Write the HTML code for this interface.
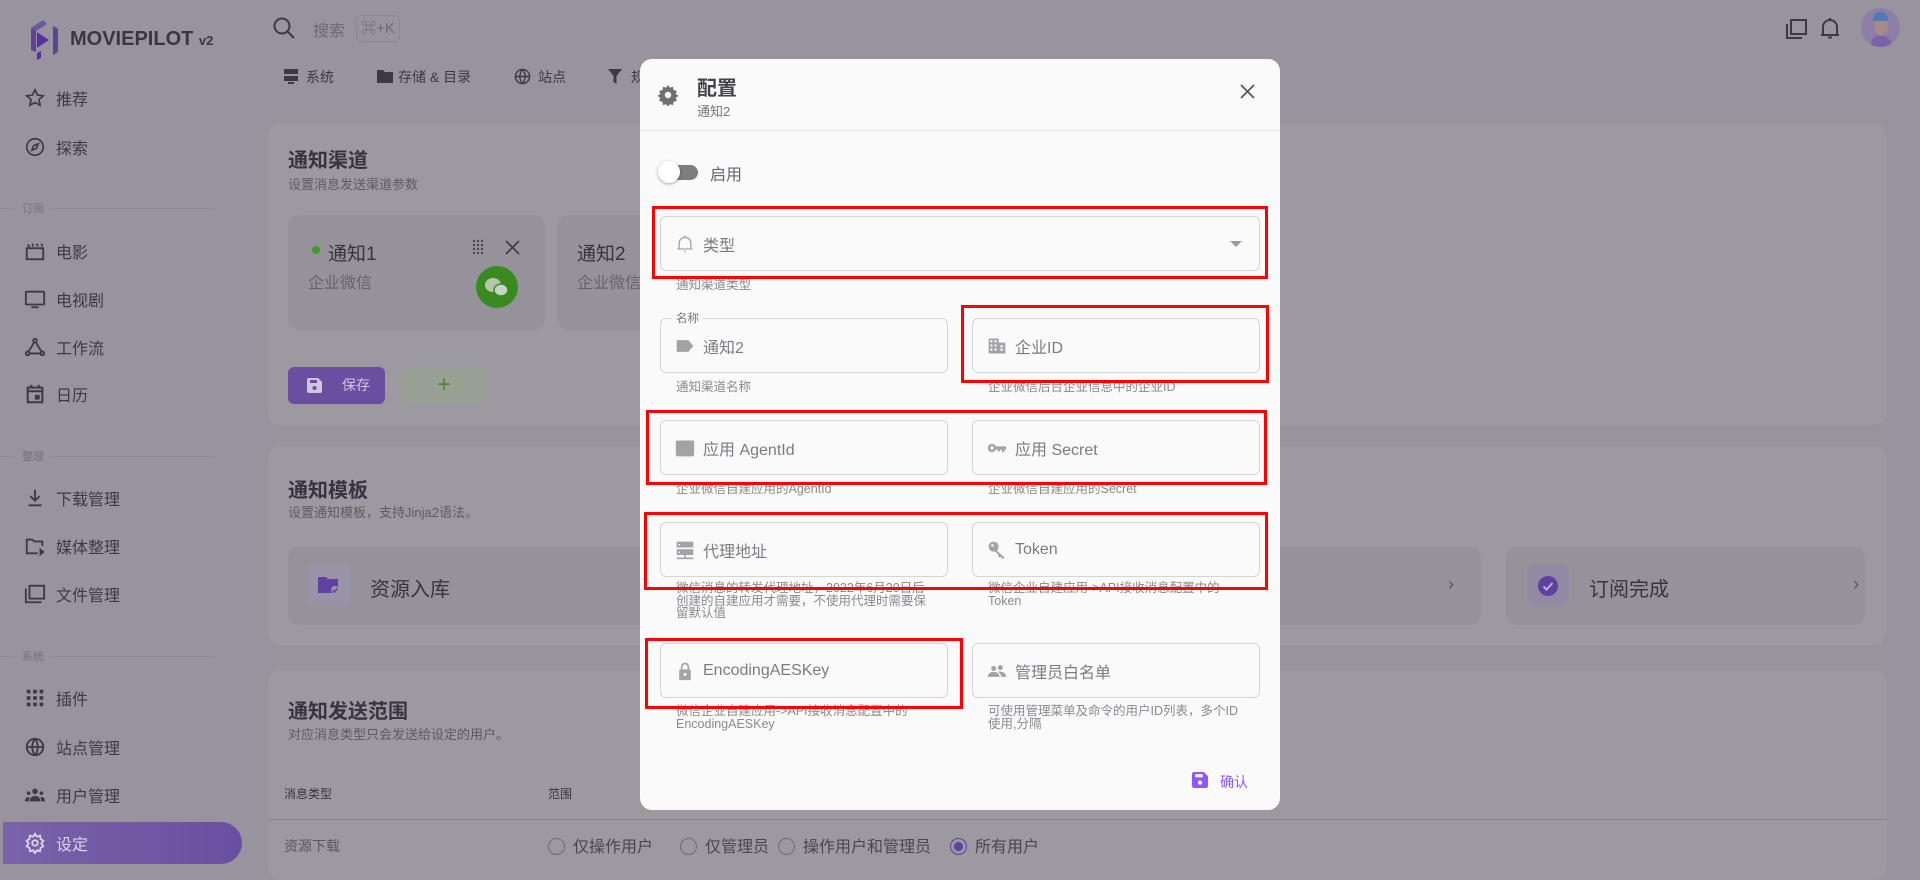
<!DOCTYPE html>
<html><head><meta charset="utf-8">
<style>
*{box-sizing:border-box;margin:0;padding:0}
body{width:1920px;height:870px;overflow:hidden;background:#97949e;font-family:"Liberation Sans","Noto Sans CJK SC",sans-serif;position:relative;color:#3d3944}
.a{position:absolute;white-space:nowrap}
.nav{position:absolute;left:24px;font-size:16px;color:#3d3944;display:flex;align-items:center;height:24px}
.nav svg{width:22px;height:22px;margin-right:10px}
.sec{position:absolute;left:0;width:210px;font-size:11px;color:#75717b;display:flex;align-items:center}
.sec:before{content:"";width:10px;border-top:1px solid #8c8993;margin-right:12px}
.sec:after{content:"";flex:1;border-top:1px solid #8c8993;margin-left:10px;margin-right:0}
.card{position:absolute;background:#9c99a1;border-radius:12px}
.dlg{position:absolute;left:640px;top:59px;width:640px;height:751px;background:#fafafa;border-radius:12px;overflow:hidden}
.f{position:absolute;border:1px solid #d5d5d7;border-radius:6px;height:55px;font-size:16px;color:#7c7c80;display:flex;align-items:center;padding-left:14px}
.f svg{width:20px;height:20px;margin-right:8px;fill:#a3a3a7}
.h{position:absolute;font-size:12.5px;line-height:12.5px;color:#8a8a8e;width:272px;white-space:normal}
.red{position:absolute;border:3px solid #f00}
.ti{position:absolute;top:546px;height:79px;background:#95929a;border-radius:12px}
.radio{display:inline-block;width:17px;height:17px;border:1.6px solid #6f6b75;border-radius:50%;vertical-align:-3px;margin-right:8px}
</style></head><body>

<svg class="a" style="left:27px;top:18px" width="36" height="42" viewBox="0 0 36 42"><path d="M4 10 L16 2 L20 6 L9 13 Z" fill="#6c56a0"/><path d="M4 10 L4 32 L9 34 L9 13Z" fill="#5b4491"/><path d="M10 14 L22 22 L10 30Z" fill="#5a2fa3"/><path d="M26 8 L31 11 L31 34 L26 37Z" fill="#5b4491"/><path d="M10 35 L14 33 L14 40 L10 42Z" fill="#5a2fa3"/></svg>
<div class="a" style="left:70px;top:28px;font-size:20px;font-weight:bold;color:#3b3742">MOVIEPILOT <span style="font-size:13px">v2</span></div>

<div class="nav" style="top:86px"><svg viewBox="0 0 24 24" fill="none" stroke="#3d3944" stroke-width="1.8"><path d="M12 3l2.7 5.8 6.3.7-4.7 4.3 1.3 6.2L12 16.9 6.4 20l1.3-6.2L3 9.5l6.3-.7z"/></svg>推荐</div>
<div class="nav" style="top:135px"><svg viewBox="0 0 24 24" fill="none" stroke="#3d3944" stroke-width="1.8"><circle cx="12" cy="12" r="9"/><path d="M15.5 8.5l-2 5-5 2 2-5z"/></svg>探索</div>
<div class="sec" style="top:200px">订阅</div>
<div class="nav" style="top:239px"><svg viewBox="0 0 24 24" fill="none" stroke="#3d3944" stroke-width="2"><rect x="3" y="9" width="18" height="12"/><path d="M4 5l2 3M9 4l1 3M14 4l1 3M19 4l1 3"/></svg>电影</div>
<div class="nav" style="top:287px"><svg viewBox="0 0 24 24" fill="none" stroke="#3d3944" stroke-width="2"><rect x="2" y="4" width="20" height="14" rx="1"/><path d="M8 21h8"/></svg>电视剧</div>
<div class="nav" style="top:335px"><svg viewBox="0 0 24 24" fill="none" stroke="#3d3944" stroke-width="2"><circle cx="12" cy="5" r="2"/><circle cx="4" cy="19" r="2"/><circle cx="20" cy="19" r="2"/><path d="M11 7l-6 10M13 7l6 10M6 19h12"/></svg>工作流</div>
<div class="nav" style="top:382px"><svg viewBox="0 0 24 24" fill="none" stroke="#3d3944" stroke-width="2.2"><rect x="4" y="5" width="16" height="16"/><path d="M8 2v4M16 2v4M4 9h16"/><rect x="13" y="14" width="3" height="3" fill="#3d3944"/></svg>日历</div>
<div class="sec" style="top:448px">整理</div>
<div class="nav" style="top:486px"><svg viewBox="0 0 24 24" fill="none" stroke="#3d3944" stroke-width="2"><path d="M12 3v11M7 10l5 5 5-5M5 20h14"/></svg>下载管理</div>
<div class="nav" style="top:534px"><svg viewBox="0 0 24 24" fill="none" stroke="#3d3944" stroke-width="2"><path d="M20 12V7h-9l-2-2H3v15h12"/><path d="M18 16v5l3-2.5z" fill="#3d3944"/></svg>媒体整理</div>
<div class="nav" style="top:582px"><svg viewBox="0 0 24 24" fill="none" stroke="#3d3944" stroke-width="2"><path d="M2 6v15h17"/><rect x="6" y="3" width="16" height="14"/></svg>文件管理</div>
<div class="sec" style="top:648px">系统</div>
<div class="nav" style="top:686px"><svg viewBox="0 0 24 24" fill="#3d3944"><rect x="3" y="3" width="4" height="4"/><rect x="10" y="3" width="4" height="4"/><rect x="17" y="3" width="4" height="4"/><rect x="3" y="10" width="4" height="4"/><rect x="10" y="10" width="4" height="4"/><rect x="17" y="10" width="4" height="4"/><rect x="3" y="17" width="4" height="4"/><rect x="10" y="17" width="4" height="4"/><rect x="17" y="17" width="4" height="4"/></svg>插件</div>
<div class="nav" style="top:735px"><svg viewBox="0 0 24 24" fill="none" stroke="#3d3944" stroke-width="2"><circle cx="12" cy="12" r="9"/><path d="M3 12h18M12 3c-4 5-4 13 0 18M12 3c4 5 4 13 0 18"/></svg>站点管理</div>
<div class="nav" style="top:783px"><svg viewBox="0 0 24 24" fill="#3d3944"><circle cx="12" cy="8" r="3"/><circle cx="5" cy="10" r="2"/><circle cx="19" cy="10" r="2"/><path d="M6 19c0-4 3-6 6-6s6 2 6 6zM1 19c0-3 2-5 4-5l1 1-1 4zM23 19c0-3-2-5-4-5l-1 1 1 4z"/></svg>用户管理</div>
<div class="a" style="left:3px;top:822px;width:239px;height:42px;border-radius:0 21px 21px 0;background:linear-gradient(90deg,#7a63a9,#6a4ea0)"></div>
<div class="nav" style="top:831px;color:#dcd5ea"><svg viewBox="0 0 24 24" fill="none" stroke="#dcd5ea" stroke-width="2"><circle cx="12" cy="12" r="3"/><path d="M12 2l2 3 3.5-1 .5 3.5 3 2-2 3 2 3-3 2-.5 3.5-3.5-1-2 3-2-3-3.5 1-.5-3.5-3-2 2-3-2-3 3-2L6.5 4l3.5 1z"/></svg>设定</div>

<svg class="a" style="left:272px;top:16px" width="24" height="24" viewBox="0 0 24 24" fill="none" stroke="#3d3944" stroke-width="2"><circle cx="10" cy="10" r="7.5"/><path d="M16 16l6 6"/></svg>
<div class="a" style="left:313px;top:17px;font-size:16px;color:#6d6974">搜索</div>
<div class="a" style="left:356px;top:15px;width:44px;height:27px;border:1px solid #8a8791;border-radius:5px;font-size:15px;color:#6d6974;text-align:center;line-height:25px">⌘+K</div>
<svg class="a" style="left:1784px;top:18px" width="24" height="22" viewBox="0 0 24 22" fill="none" stroke="#3d3944" stroke-width="2"><rect x="7" y="2" width="15" height="14"/><path d="M3 6v14h15"/></svg>
<svg class="a" style="left:1820px;top:16px" width="20" height="24" viewBox="0 0 20 24" fill="none" stroke="#3d3944" stroke-width="2"><path d="M3 19V11a7 7 0 0114 0v8zM1 19h18M10 2v2M8 21.5h4"/></svg>
<div class="a" style="left:1861px;top:8px;width:39px;height:39px;border-radius:50%;background:#8d7fa8;overflow:hidden"><div style="position:absolute;left:13px;top:9px;width:14px;height:18px;border-radius:50%;background:#a58a8a"></div><div style="position:absolute;left:12px;top:4px;width:15px;height:9px;border-radius:8px 8px 2px 2px;background:#4d7ab5"></div><div style="position:absolute;left:10px;top:28px;width:20px;height:14px;border-radius:8px 8px 0 0;background:#7e5fa8"></div></div>

<svg class="a" style="left:283px;top:68px" width="16" height="16" viewBox="0 0 16 16" fill="#3d3944"><rect x="1" y="1" width="14" height="5"/><rect x="1" y="8" width="14" height="5"/><rect x="5" y="14" width="6" height="2"/></svg>
<div class="a" style="left:306px;top:67px;font-size:14px">系统</div>
<svg class="a" style="left:377px;top:69px" width="16" height="14" viewBox="0 0 16 14" fill="#3d3944"><path d="M0 1h6l2 2h8v11H0z"/></svg>
<div class="a" style="left:398px;top:67px;font-size:14px">存储 &amp; 目录</div>
<svg class="a" style="left:514px;top:68px" width="17" height="17" viewBox="0 0 24 24" fill="none" stroke="#3d3944" stroke-width="2"><circle cx="12" cy="12" r="10"/><path d="M2 12h20M12 2c-5 6-5 14 0 20M12 2c5 6 5 14 0 20"/></svg>
<div class="a" style="left:538px;top:67px;font-size:14px">站点</div>
<svg class="a" style="left:608px;top:69px" width="14" height="15" viewBox="0 0 14 15" fill="#3d3944"><path d="M0 0h14L8.5 7v8L5.5 13V7z"/></svg>
<div class="a" style="left:631px;top:67px;font-size:14px">规则</div>

<div class="card" style="left:268px;top:124px;width:1618px;height:301px"></div>
<div class="a" style="left:288px;top:144px;font-size:20px;font-weight:bold;color:#38343f">通知渠道</div>
<div class="a" style="left:288px;top:174px;font-size:13px;color:#5e5a65">设置消息发送渠道参数</div>
<div class="a" style="left:288px;top:215px;width:257px;height:115px;background:#95929a;border-radius:12px"></div>
<div class="a" style="left:312px;top:246px;width:8px;height:8px;border-radius:50%;background:#3f9a2e"></div>
<div class="a" style="left:328px;top:239px;font-size:19px;color:#38343f">通知1</div>
<div class="a" style="left:308px;top:269px;font-size:16px;color:#67636d">企业微信</div>
<svg class="a" style="left:472px;top:239px" width="12" height="16" viewBox="0 0 12 16" fill="#4a4650"><circle cx="2" cy="2" r="1.2"/><circle cx="6" cy="2" r="1.2"/><circle cx="10" cy="2" r="1.2"/><circle cx="2" cy="6" r="1.2"/><circle cx="6" cy="6" r="1.2"/><circle cx="10" cy="6" r="1.2"/><circle cx="2" cy="10" r="1.2"/><circle cx="6" cy="10" r="1.2"/><circle cx="10" cy="10" r="1.2"/><circle cx="2" cy="14" r="1.2"/><circle cx="6" cy="14" r="1.2"/><circle cx="10" cy="14" r="1.2"/></svg>
<svg class="a" style="left:505px;top:240px" width="15" height="15" viewBox="0 0 15 15" stroke="#3d3944" stroke-width="1.6"><path d="M1 1l13 13M14 1L1 14"/></svg>
<div class="a" style="left:476px;top:266px;width:42px;height:42px;border-radius:50%;background:#3a8a22"><svg width="42" height="42" viewBox="0 0 42 42"><ellipse cx="17" cy="19" rx="8" ry="7" fill="#b4c7ae"/><ellipse cx="25" cy="24" rx="7" ry="6" fill="#c9d4c4" stroke="#3a8a22" stroke-width="1.5"/></svg></div>
<div class="a" style="left:557px;top:215px;width:83px;height:115px;background:#95929a;border-radius:12px 0 0 12px"></div>
<div class="a" style="left:577px;top:239px;font-size:19px;color:#38343f">通知2</div>
<div class="a" style="left:577px;top:269px;font-size:16px;color:#67636d">企业微信</div>
<div class="a" style="left:288px;top:367px;width:97px;height:37px;background:#6a4ea0;border-radius:6px;color:#cfc7e0;font-size:14px;line-height:37px;padding-left:54px">保存</div>
<svg class="a" style="left:307px;top:378px" width="15" height="15" viewBox="0 0 15 15" fill="#cfc7e0"><path d="M0 2a2 2 0 012-2h9l4 4v9a2 2 0 01-2 2H2a2 2 0 01-2-2z"/><rect x="3" y="2" width="7" height="3" fill="#6a4ea0"/><circle cx="7.5" cy="10" r="2" fill="#6a4ea0"/></svg>
<div class="a" style="left:402px;top:367px;width:84px;height:37px;background:#98a093;border-radius:6px;color:#4d8a2f;font-size:24px;line-height:35px;text-align:center">+</div>

<div class="card" style="left:268px;top:446px;width:1618px;height:199px"></div>
<div class="a" style="left:288px;top:474px;font-size:20px;font-weight:bold;color:#38343f">通知模板</div>
<div class="a" style="left:288px;top:502px;font-size:13px;color:#5e5a65">设置通知模板，支持Jinja2语法。</div>
<div class="ti" style="left:288px;width:376px"></div>
<div class="a" style="left:308px;top:564px;width:42px;height:42px;background:#9a93a8;border-radius:7px"></div>
<svg class="a" style="left:318px;top:575px" width="22" height="20" viewBox="0 0 22 20"><path d="M0 2h8l2 2h10v14H0z" fill="#6040a0"/><circle cx="17" cy="15" r="4" fill="#9a93a8"/><path d="M14.5 15l2 2 3-3.5" stroke="#6040a0" stroke-width="1.5" fill="none"/></svg>
<div class="a" style="left:370px;top:573px;font-size:20px;color:#38343f">资源入库</div>
<div class="ti" style="left:688px;width:390px"></div>
<div class="ti" style="left:1100px;width:381px"></div>
<div class="a" style="left:1448px;top:574px;font-size:18px;color:#5a5660">›</div>
<div class="ti" style="left:1506px;width:359px"></div>
<div class="a" style="left:1527px;top:564px;width:42px;height:42px;background:#928aa2;border-radius:7px"></div>
<svg class="a" style="left:1537px;top:575px" width="22" height="22" viewBox="0 0 22 22"><circle cx="11" cy="11" r="10" fill="#6040a0"/><path d="M6.5 11.5l3 3 6-6.5" stroke="#bdb3d0" stroke-width="2" fill="none"/></svg>
<div class="a" style="left:1589px;top:573px;font-size:20px;color:#38343f">订阅完成</div>
<div class="a" style="left:1853px;top:574px;font-size:18px;color:#5a5660">›</div>

<div class="card" style="left:268px;top:670px;width:1618px;height:210px"></div>
<div class="a" style="left:288px;top:695px;font-size:20px;font-weight:bold;color:#38343f">通知发送范围</div>
<div class="a" style="left:288px;top:724px;font-size:13px;color:#5e5a65">对应消息类型只会发送给设定的用户。</div>
<div class="a" style="left:284px;top:785px;font-size:12px;color:#38343f">消息类型</div>
<div class="a" style="left:548px;top:785px;font-size:12px;color:#38343f">范围</div>
<div class="a" style="left:268px;top:819px;width:1618px;border-top:1px solid #85828c"></div>
<div class="a" style="left:284px;top:836px;font-size:14px;color:#5a5660">资源下载</div>

<div class="dlg">
 <svg class="a" style="left:17px;top:25px" width="22" height="22" viewBox="0 0 24 24" fill="#707074"><path d="M12 1l2 3 3.5-1 .5 3.5 3.5 1-1 3.5 3 2-3 2 1 3.5-3.5 1-.5 3.5-3.5-1-2 3-2-3-3.5 1-.5-3.5-3.5-1 1-3.5-3-2 3-2-1-3.5 3.5-1L6.5 3 10 4z"/><circle cx="12" cy="12" r="3.5" fill="#fafafa"/></svg>
 <div class="a" style="left:57px;top:13px;font-size:20px;font-weight:bold;color:#444448">配置</div>
 <div class="a" style="left:57px;top:42px;font-size:13px;color:#77777b">通知2</div>
 <svg class="a" style="left:600px;top:25px" width="15" height="15" viewBox="0 0 15 15" stroke="#555" stroke-width="1.7"><path d="M1 1l13 13M14 1L1 14"/></svg>
 <div class="a" style="left:0;top:71px;width:640px;border-top:1px solid #e4e4e6"></div>
 <div class="a" style="left:20px;top:106px;width:38px;height:15px;border-radius:8px;background:#7e7e80"></div>
 <div class="a" style="left:18px;top:102px;width:22px;height:22px;border-radius:50%;background:#fff;box-shadow:0 1px 3px rgba(0,0,0,.35)"></div>
 <div class="a" style="left:70px;top:102px;font-size:16px;color:#66666a">启用</div>

 <div class="f" style="left:20px;top:157px;width:600px"><svg viewBox="0 0 24 24" fill="none" stroke="#a3a3a7" stroke-width="1.6" style="fill:none"><path d="M5 18v-7a7 7 0 0114 0v7zM3 18h18M12 2v2M11 21h2"/></svg>类型</div>
 <svg class="a" style="left:590px;top:182px" width="12" height="6" viewBox="0 0 12 6" fill="#9a9a9e"><path d="M0 0h12L6 6z"/></svg>
 <div class="h" style="left:36px;top:220px">通知渠道类型</div>

 <div class="f" style="left:20px;top:259px;width:288px"><svg viewBox="0 0 24 24"><path d="M2 5h14l6 7-6 7H2z"/></svg>通知2</div>
 <div class="a" style="left:32px;top:251px;font-size:11.5px;color:#77777b;background:#fafafa;padding:0 4px">名称</div>
 <div class="h" style="left:36px;top:322px">通知渠道名称</div>
 <div class="f" style="left:332px;top:259px;width:288px"><svg viewBox="0 0 24 24"><path d="M2 3h12v18H2zM14 8h8v13h-8z"/><g fill="#fafafa"><rect x="4" y="5" width="2.5" height="2.5"/><rect x="9" y="5" width="2.5" height="2.5"/><rect x="4" y="10" width="2.5" height="2.5"/><rect x="9" y="10" width="2.5" height="2.5"/><rect x="4" y="15" width="2.5" height="2.5"/><rect x="9" y="15" width="2.5" height="2.5"/><rect x="16" y="11" width="3" height="2.5"/><rect x="16" y="15" width="3" height="2.5"/></g></svg>企业ID</div>
 <div class="h" style="left:348px;top:322px">企业微信后台企业信息中的企业ID</div>

 <div class="f" style="left:20px;top:361px;width:288px"><svg viewBox="0 0 24 24"><rect x="1" y="3" width="22" height="19" rx="2"/><rect x="3" y="6" width="18" height="14" fill="#a3a3a7" opacity=".85"/></svg>应用 AgentId</div>
 <div class="h" style="left:36px;top:424px">企业微信自建应用的AgentId</div>
 <div class="f" style="left:332px;top:361px;width:288px"><svg viewBox="0 0 24 24"><circle cx="6" cy="12" r="5"/><circle cx="6" cy="12" r="2" fill="#fafafa"/><path d="M10 10h13v4h-2v3h-3v-3h-2v2h-3v-2h-3z"/></svg>应用 Secret</div>
 <div class="h" style="left:348px;top:424px">企业微信自建应用的Secret</div>

 <div class="f" style="left:20px;top:463px;width:288px"><svg viewBox="0 0 24 24"><rect x="2" y="2" width="20" height="7"/><rect x="2" y="11" width="20" height="7"/><rect x="11" y="18" width="2" height="3"/><rect x="2" y="21" width="20" height="2"/><g fill="#fafafa"><rect x="4" y="5" width="2" height="1.5"/><rect x="4" y="14" width="2" height="1.5"/></g></svg>代理地址</div>
 <div class="h" style="left:36px;top:523px;width:250px">微信消息的转发代理地址，2022年6月20日后创建的自建应用才需要，不使用代理时需要保留默认值</div>
 <div class="f" style="left:332px;top:463px;width:288px"><svg viewBox="0 0 24 24"><circle cx="8" cy="8" r="6"/><path d="M11 12l10 9-2 2-3-3-1 1-2-2 1-1-5-5z"/><circle cx="6.5" cy="6.5" r="1.5" fill="#fafafa"/></svg>Token</div>
 <div class="h" style="left:348px;top:523px;width:262px">微信企业自建应用->API接收消息配置中的Token</div>

 <div class="f" style="left:20px;top:584px;width:288px"><svg viewBox="0 0 24 24"><path d="M7 10V7a5 5 0 0110 0v3h-2V7a3 3 0 00-6 0v3z"/><rect x="5" y="10" width="14" height="13" rx="2"/><circle cx="12" cy="16" r="1.8" fill="#fafafa"/></svg>EncodingAESKey</div>
 <div class="h" style="left:36px;top:646px;width:262px">微信企业自建应用->API接收消息配置中的EncodingAESKey</div>
 <div class="f" style="left:332px;top:584px;width:288px"><svg viewBox="0 0 24 24"><circle cx="8" cy="9" r="3"/><circle cx="16" cy="8" r="3"/><path d="M1 19c0-4 3-6 7-6s7 2 7 6zM13 13c5-1 10 1 10 6h-6c0-3-2-5-4-6z"/></svg>管理员白名单</div>
 <div class="h" style="left:348px;top:646px;width:262px">可使用管理菜单及命令的用户ID列表，多个ID使用,分隔</div>

 <svg class="a" style="left:552px;top:713px" width="16" height="16" viewBox="0 0 15 15" fill="#8c57ff"><path d="M0 2a2 2 0 012-2h9l4 4v9a2 2 0 01-2 2H2a2 2 0 01-2-2z"/><rect x="3" y="2" width="7" height="3" fill="#fafafa"/><circle cx="7.5" cy="10" r="2" fill="#fafafa"/></svg>
 <div class="a" style="left:580px;top:713px;font-size:14px;color:#8c57ff">确认</div>
</div>

<div class="a" style="left:548px;top:833px;font-size:16px;color:#4a4650"><span class="radio"></span>仅操作用户</div>
<div class="a" style="left:680px;top:833px;font-size:16px;color:#4a4650"><span class="radio"></span>仅管理员</div>
<div class="a" style="left:778px;top:833px;font-size:16px;color:#4a4650"><span class="radio"></span>操作用户和管理员</div>
<div class="a" style="left:950px;top:833px;font-size:16px;color:#4a4650"><span class="radio" style="border-color:#6040a0;background:radial-gradient(circle,#6040a0 4px,transparent 5px)"></span>所有用户</div>

<div class="red" style="left:652px;top:206px;width:616px;height:73px"></div>
<div class="red" style="left:961px;top:305px;width:308px;height:78px"></div>
<div class="red" style="left:646px;top:410px;width:621px;height:75px"></div>
<div class="red" style="left:644px;top:512px;width:624px;height:78px"></div>
<div class="red" style="left:645px;top:638px;width:318px;height:71px"></div>
</body></html>
